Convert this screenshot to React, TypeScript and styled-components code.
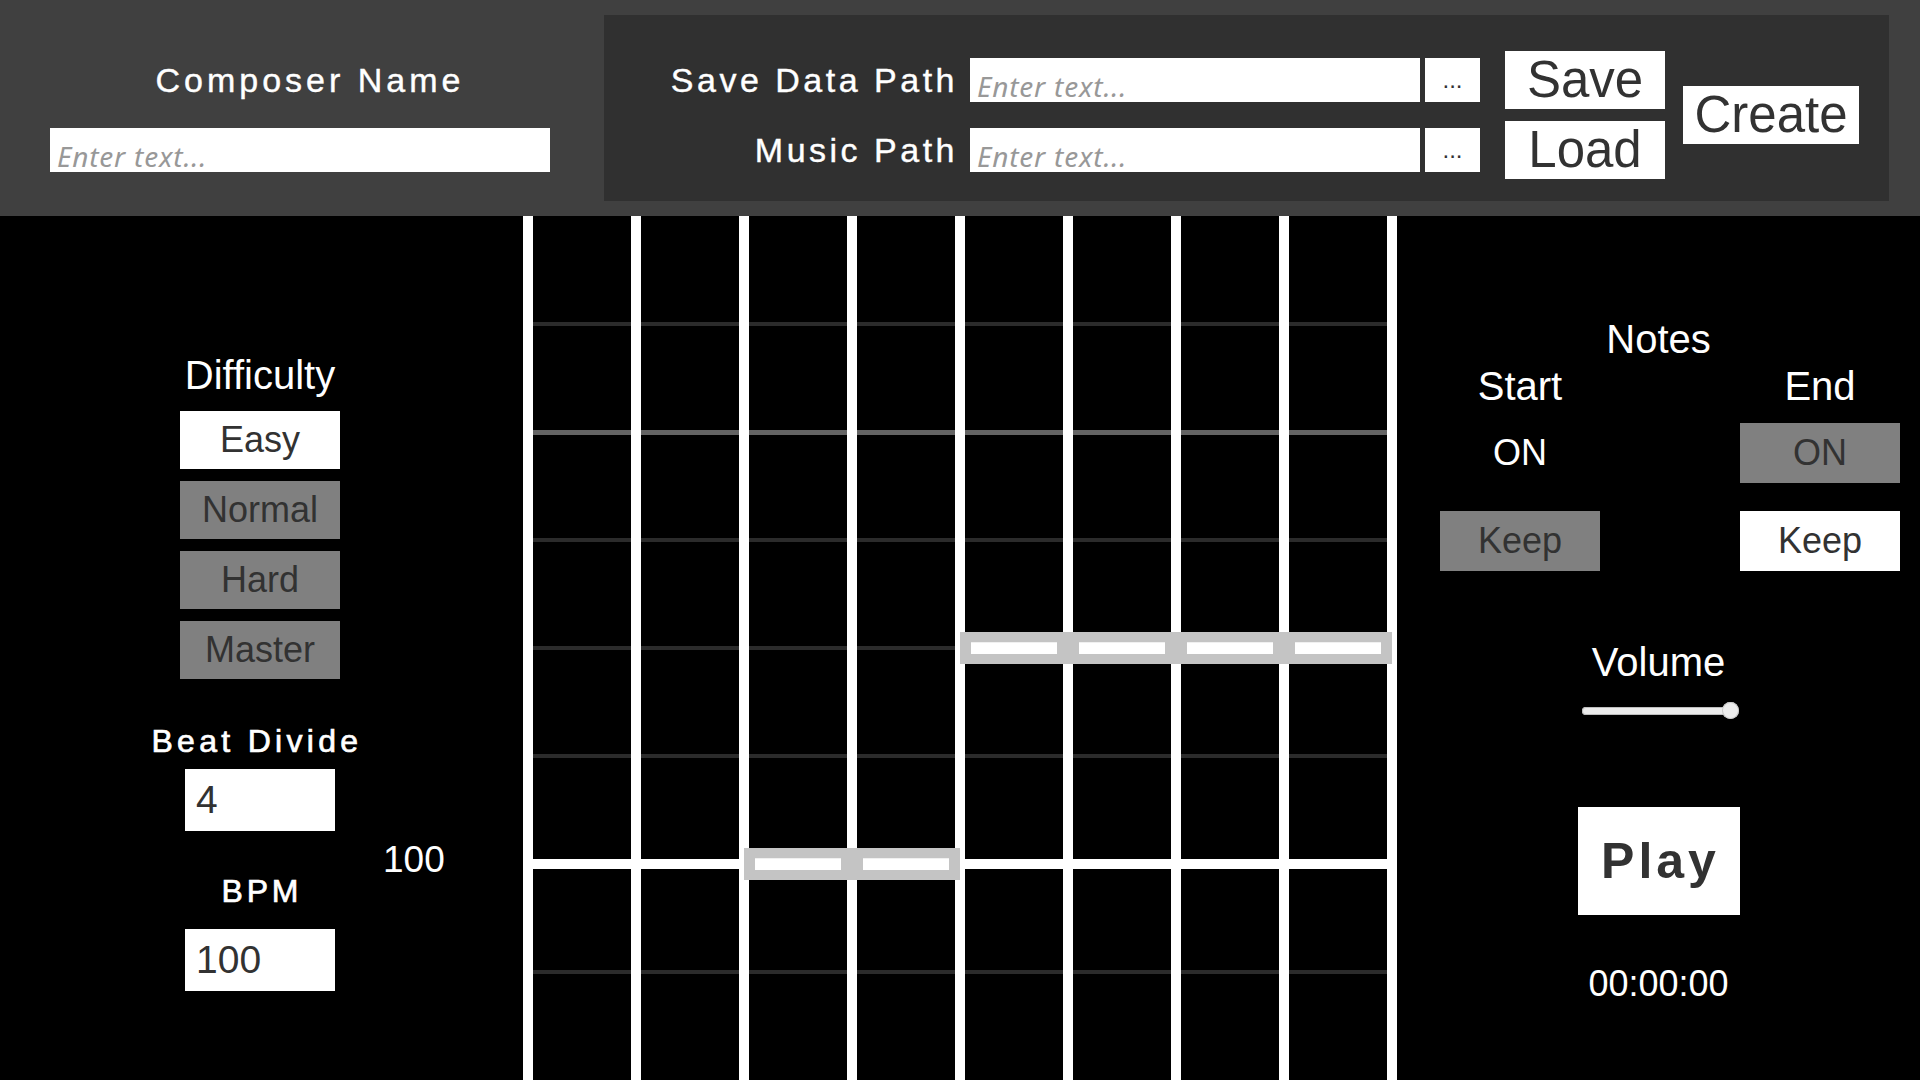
import React from 'react';
import styled, { createGlobalStyle } from 'styled-components';

const GlobalStyle = createGlobalStyle`
  html, body { margin: 0; padding: 0; background: #000; }
  body { font-family: "Liberation Sans", Arial, sans-serif; }
  *, *::before, *::after { box-sizing: border-box; }
`;

const Screen = styled.div`
  width: 1920px;
  height: 1080px;
  display: flex;
  flex-direction: column;
  background: #000;
  overflow: hidden;
`;

/* ---------- Header ---------- */

const Header = styled.header`
  height: 216px;
  flex: none;
  background: #404040;
  display: flex;
  align-items: flex-start;
  padding: 15px 31px 15px 50px;
`;

const ComposerBlock = styled.div`
  width: 500px;
  margin-top: 43px;
  display: flex;
  flex-direction: column;
  gap: 26px;
`;

const HeaderLabel = styled.div<{ $align?: 'center' | 'right'; $w?: number }>`
  height: 44px;
  line-height: 44px;
  font-size: 34px;
  letter-spacing: ${(p) => (p.$align === 'right' ? 3.5 : 4)}px;
  color: #fff;
  -webkit-text-stroke: 0.4px #fff;
  white-space: nowrap;
  text-align: ${(p) => p.$align ?? 'center'};
  ${(p) => (p.$w ? `width: ${p.$w}px; flex: none;` : '')}
  ${(p) => (p.$align === 'center' || !p.$align ? 'padding-left: 20px;' : '')}
`;

const TextField = styled.input<{ $w: number; $ml?: number }>`
  width: ${(p) => p.$w}px;
  height: 44px;
  flex: none;
  margin-left: ${(p) => p.$ml ?? 0}px;
  border: none;
  outline: none;
  border-radius: 0;
  background: #fff;
  padding: 12px 7px 0;
  font-family: "Noto Sans", "Liberation Sans", sans-serif;
  font-style: italic;
  font-size: 28px;
  letter-spacing: 0.8px;
  color: #323232;
  &::placeholder {
    color: #989898;
    opacity: 1;
  }
`;

const PathPanel = styled.section`
  margin-left: 54px;
  width: 1285px;
  height: 186px;
  background: #303030;
  display: flex;
  align-items: center;
  padding: 36px 0 22px;
`;

const PathRows = styled.div`
  display: flex;
  flex-direction: column;
  gap: 26px;
`;

const PathRow = styled.div`
  display: flex;
  align-items: center;
`;

const BrowseButton = styled.button`
  width: 55px;
  height: 44px;
  margin-left: 5px;
  border: none;
  border-radius: 0;
  background: #fff;
  color: #323232;
  font-family: "Liberation Sans", Arial, sans-serif;
  font-size: 24px;
  line-height: 44px;
  padding: 0;
`;

const ActionStack = styled.div`
  margin-left: 25px;
  display: flex;
  flex-direction: column;
  gap: 12px;
`;

type Tone = 'white' | 'gray' | 'clear';

const Btn = styled.button<{ $w: number; $h: number; $size: number; $tone?: Tone; $ml?: number }>`
  width: ${(p) => p.$w}px;
  height: ${(p) => p.$h}px;
  flex: none;
  margin-left: ${(p) => p.$ml ?? 0}px;
  border: none;
  border-radius: 0;
  padding: 0;
  background: ${(p) => (p.$tone === 'gray' ? '#808080' : p.$tone === 'clear' ? 'transparent' : '#fff')};
  color: ${(p) => (p.$tone === 'clear' ? '#fff' : '#323232')};
  font-family: "Liberation Sans", Arial, sans-serif;
  font-size: ${(p) => p.$size}px;
  line-height: ${(p) => p.$h}px;
  text-align: center;
  white-space: nowrap;
`;

/* ---------- Workspace ---------- */

const Workspace = styled.main`
  flex: 1;
  display: flex;
`;

const LeftPane = styled.aside`
  width: 523px;
  flex: none;
  display: flex;
  padding-left: 140px;
`;

const Controls = styled.div`
  width: 240px;
  display: flex;
  flex-direction: column;
  align-items: center;
  padding-top: 139px;
`;

const Title = styled.div<{ $size?: number; $mt?: number }>`
  font-size: ${(p) => p.$size ?? 40}px;
  line-height: ${(p) => p.$size ?? 40}px;
  margin-top: ${(p) => p.$mt ?? 0}px;
  color: #fff;
  white-space: nowrap;
`;

const SpacedTitle = styled.div<{ $mt: number; $shift?: number }>`
  font-size: 32px;
  line-height: 32px;
  letter-spacing: ${(p) => (p.$shift ? 4.3 : 3.8)}px;
  padding-left: 3.8px;
  margin-top: ${(p) => p.$mt}px;
  margin-right: ${(p) => (p.$shift ?? 0) * 2}px;
  color: #fff;
  -webkit-text-stroke: 0.7px #fff;
  white-space: nowrap;
`;

const ButtonList = styled.div`
  margin-top: 16px;
  display: flex;
  flex-direction: column;
  gap: 12px;
`;

const NumberField = styled.input<{ $mt: number }>`
  width: 150px;
  height: 62px;
  margin-top: ${(p) => p.$mt}px;
  border: none;
  outline: none;
  border-radius: 0;
  background: #fff;
  padding: 0 11px;
  font-family: "Liberation Sans", Arial, sans-serif;
  font-size: 39px;
  color: #323232;
`;

const TempoMarker = styled.div`
  margin-top: 625px;
  margin-left: 3px;
  font-size: 37px;
  line-height: 37px;
  height: 37px;
  color: #fff;
`;

/* ---------- Board ---------- */

const Board = styled.div`
  position: relative;
  width: 874px;
  height: 864px;
  flex: none;
  display: flex;
  gap: 10px;
  padding: 0 10px;
  background: #fff;
`;

const Lane = styled.div`
  width: 98px;
  height: 100%;
  display: flex;
  flex-direction: column;
  background: #000;
`;

const LaneGap = styled.div<{ $h: number }>`
  height: ${(p) => p.$h}px;
  flex: none;
`;

const BeatLine = styled.div<{ $t: number; $c: string }>`
  height: ${(p) => p.$t}px;
  flex: none;
  background: ${(p) => p.$c};
`;

const Note = styled.div<{ $x: number; $y: number; $lanes: number }>`
  position: absolute;
  left: ${(p) => p.$x}px;
  top: ${(p) => p.$y}px;
  width: ${(p) => p.$lanes * 108}px;
  height: 32px;
  background: #c4c4c4;
  display: flex;
  gap: 22px;
  padding: 10px 11px;
`;

const NoteBar = styled.div`
  flex: 1;
  background: #fff;
  border-top: 1px solid #f0f0f0;
`;

/* ---------- Right pane ---------- */

const RightPane = styled.aside`
  width: 523px;
  flex: none;
  display: flex;
  flex-direction: column;
  align-items: center;
  padding-top: 103px;
`;

const ToggleColumns = styled.div`
  align-self: stretch;
  margin-top: 7px;
  display: flex;
  gap: 140px;
  padding-left: 43px;
`;

const ToggleColumn = styled.div`
  width: 160px;
  display: flex;
  flex-direction: column;
  align-items: center;
  gap: 28px;
`;

const ToggleHead = styled.div`
  display: flex;
  flex-direction: column;
  align-items: center;
  gap: 17px;
`;

const Slider = styled.div`
  position: relative;
  width: 151px;
  height: 17px;
  margin-top: 20px;
  margin-right: 3px;
  display: flex;
  align-items: center;
`;

const SliderTrack = styled.div`
  width: 100%;
  height: 8px;
  border-radius: 4px;
  background: #ececec;
  box-shadow: inset 0 0 0 1px #bdbdbd;
`;

const SliderThumb = styled.div`
  position: absolute;
  left: 140px;
  top: 0;
  width: 17px;
  height: 17px;
  border-radius: 50%;
  background: #ededed;
  box-shadow: inset 0 0 0 1px #c8c8c8;
`;

const PlayButton = styled.button`
  width: 162px;
  height: 108px;
  margin-top: 88px;
  border: none;
  border-radius: 0;
  background: #fff;
  color: #323232;
  font-family: "Liberation Sans", Arial, sans-serif;
  font-weight: 700;
  font-size: 50px;
  letter-spacing: 4px;
  padding: 0 0 0 4px;
  line-height: 108px;
`;

const TimeDisplay = styled.div`
  margin-top: 51px;
  font-size: 36px;
  line-height: 36px;
  color: #fff;
`;

const gridLines = [
  { y: 108, t: 4, c: '#2b2b2b' },
  { y: 216, t: 5, c: '#646464' },
  { y: 324, t: 4, c: '#2b2b2b' },
  { y: 432, t: 4, c: '#2b2b2b' },
  { y: 540, t: 4, c: '#2b2b2b' },
  { y: 648, t: 10, c: '#ffffff' },
  { y: 756, t: 4, c: '#2b2b2b' },
];

function LaneColumn() {
  let cursor = 0;
  const parts: React.ReactNode[] = [];
  gridLines.forEach((l, i) => {
    const start = l.y - l.t / 2;
    parts.push(<LaneGap key={`g${i}`} $h={start - cursor} />);
    parts.push(<BeatLine key={`l${i}`} $t={l.t} $c={l.c} />);
    cursor = start + l.t;
  });
  return <Lane>{parts}</Lane>;
}

const notes = [
  { lane: 4, lanes: 4, y: 416 },
  { lane: 2, lanes: 2, y: 632 },
];

export default function App() {
  return (
    <Screen>
      <GlobalStyle />
      <Header>
        <ComposerBlock>
          <HeaderLabel>Composer Name</HeaderLabel>
          <TextField $w={500} placeholder="Enter text..." />
        </ComposerBlock>
        <PathPanel>
          <PathRows>
            <PathRow>
              <HeaderLabel $align="right" $w={354}>Save Data Path</HeaderLabel>
              <TextField $w={450} $ml={12} placeholder="Enter text..." />
              <BrowseButton>...</BrowseButton>
            </PathRow>
            <PathRow>
              <HeaderLabel $align="right" $w={354}>Music Path</HeaderLabel>
              <TextField $w={450} $ml={12} placeholder="Enter text..." />
              <BrowseButton>...</BrowseButton>
            </PathRow>
          </PathRows>
          <ActionStack>
            <Btn $w={160} $h={58} $size={51}>Save</Btn>
            <Btn $w={160} $h={58} $size={51}>Load</Btn>
          </ActionStack>
          <Btn $w={176} $h={58} $size={51} $ml={18}>Create</Btn>
        </PathPanel>
      </Header>

      <Workspace>
        <LeftPane>
          <Controls>
            <Title>Difficulty</Title>
            <ButtonList>
              <Btn $w={160} $h={58} $size={36}>Easy</Btn>
              <Btn $w={160} $h={58} $size={36} $tone="gray">Normal</Btn>
              <Btn $w={160} $h={58} $size={36} $tone="gray">Hard</Btn>
              <Btn $w={160} $h={58} $size={36} $tone="gray">Master</Btn>
            </ButtonList>
            <SpacedTitle $mt={46} $shift={5}>Beat Divide</SpacedTitle>
            <NumberField $mt={12} defaultValue="4" />
            <SpacedTitle $mt={44}>BPM</SpacedTitle>
            <NumberField $mt={22} defaultValue="100" />
          </Controls>
          <TempoMarker>100</TempoMarker>
        </LeftPane>

        <Board>
          {Array.from({ length: 8 }, (_, i) => (
            <LaneColumn key={i} />
          ))}
          {notes.map((n, i) => (
            <Note key={i} $x={5 + n.lane * 108} $y={n.y} $lanes={n.lanes}>
              {Array.from({ length: n.lanes }, (_, j) => (
                <NoteBar key={j} />
              ))}
            </Note>
          ))}
        </Board>

        <RightPane>
          <Title>Notes</Title>
          <ToggleColumns>
            <ToggleColumn>
              <ToggleHead>
                <Title>Start</Title>
                <Btn $w={160} $h={60} $size={36} $tone="clear">ON</Btn>
              </ToggleHead>
              <Btn $w={160} $h={60} $size={36} $tone="gray">Keep</Btn>
            </ToggleColumn>
            <ToggleColumn>
              <ToggleHead>
                <Title>End</Title>
                <Btn $w={160} $h={60} $size={36} $tone="gray">ON</Btn>
              </ToggleHead>
              <Btn $w={160} $h={60} $size={36}>Keep</Btn>
            </ToggleColumn>
          </ToggleColumns>
          <Title $mt={71}>Volume</Title>
          <Slider>
            <SliderTrack />
            <SliderThumb />
          </Slider>
          <PlayButton>Play</PlayButton>
          <TimeDisplay>00:00:00</TimeDisplay>
        </RightPane>
      </Workspace>
    </Screen>
  );
}
